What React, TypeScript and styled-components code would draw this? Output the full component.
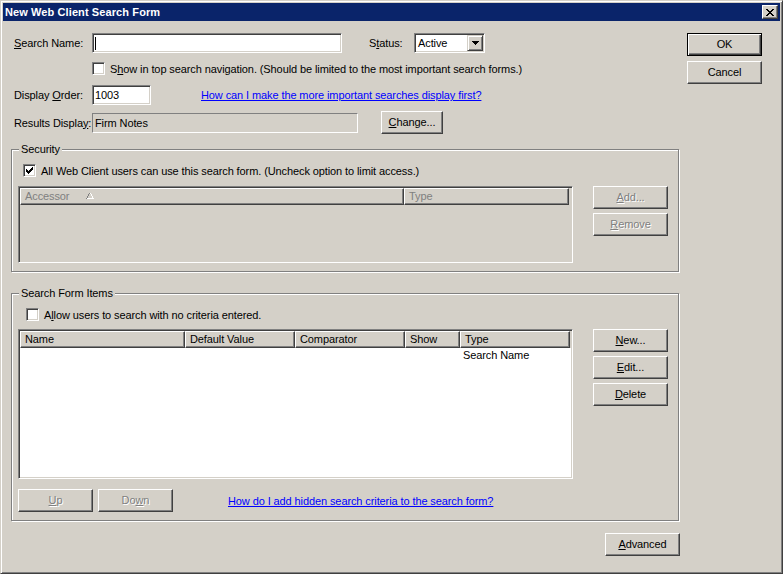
import React from 'react'
import styled, { createGlobalStyle, css } from 'styled-components'

const GlobalStyle = createGlobalStyle`
  html, body {
    margin: 0;
    padding: 0;
    background: #d4d0c8;
  }
  body {
    font-family: "Liberation Sans", Arial, sans-serif;
    font-size: 11px;
    letter-spacing: -0.1px;
    color: #000;
  }
`

const FONT = `"Liberation Sans", Arial, sans-serif`

// classic win32 bevels
const raised = css`
  border: 1px solid;
  border-color: #fff #404040 #404040 #fff;
  box-shadow: inset -1px -1px #808080;
`
const sunken = css`
  border: 1px solid;
  border-color: #808080 #fff #fff #808080;
  box-shadow: inset 1px 1px #404040, inset -1px -1px #d4d0c8;
`

const Window = styled.div`
  width: 783px;
  height: 574px;
  box-sizing: border-box;
  background: #d4d0c8;
  border: 1px solid;
  border-color: #d4d0c8 #404040 #404040 #d4d0c8;
  box-shadow: inset 1px 1px #fff, inset -1px -1px #808080;
  padding: 2px;
  display: flex;
  flex-direction: column;
  overflow: hidden;
`

const TitleBar = styled.div`
  height: 18px;
  flex-shrink: 0;
  background: #0a246a;
  display: flex;
  align-items: center;
  justify-content: space-between;
  padding: 0 2px 0 2px;
`

const TitleText = styled.span`
  color: #fff;
  font-weight: bold;
  font-size: 11px;
  letter-spacing: 0.1px;
`

const CloseButton = styled.div`
  width: 16px;
  height: 14px;
  box-sizing: border-box;
  background: #d4d0c8;
  ${raised};
  display: flex;
  align-items: center;
  justify-content: center;
`

const Body = styled.div`
  flex: 1;
  display: flex;
  padding: 12px 0 0 8px;
`

const Main = styled.div`
  width: 669px;
  display: flex;
  flex-direction: column;
`

const Side = styled.div`
  margin-left: 7px;
  display: flex;
  flex-direction: column;
  gap: 5px;
`

const FormRow = styled.div<{ $top?: number; $height?: number }>`
  display: flex;
  align-items: center;
  height: ${p => p.$height ?? 20}px;
  margin-top: ${p => p.$top ?? 0}px;
  padding-left: 3px;
`

const Label = styled.span<{ $width?: number; $gap?: number }>`
  width: ${p => (p.$width ? `${p.$width}px` : 'auto')};
  margin-left: ${p => p.$gap ?? 0}px;
  flex-shrink: 0;
  white-space: nowrap;
`

const Accel = styled.span`
  text-decoration: underline;
`

const Field = styled.div<{ $width: number; $readOnly?: boolean }>`
  width: ${p => p.$width}px;
  height: 20px;
  box-sizing: border-box;
  flex-shrink: 0;
  display: flex;
  align-items: center;
  ${p =>
    p.$readOnly
      ? css`
          border: 1px solid;
          border-color: #808080 #fff #fff #808080;
          background: #d4d0c8;
          padding-left: 2px;
        `
      : css`
          ${sunken};
          background: #fff;
          padding-left: 2px;
        `}
`

const Caret = styled.span`
  width: 1px;
  height: 13px;
  background: #000;
`

const Select = styled.div`
  width: 71px;
  height: 20px;
  box-sizing: border-box;
  ${sunken};
  background: #fff;
  display: flex;
  align-items: center;
  justify-content: space-between;
  padding: 0 1px 0 3px;
`

const DropButton = styled.div`
  width: 16px;
  height: 16px;
  box-sizing: border-box;
  background: #d4d0c8;
  border: 1px solid;
  border-color: #d4d0c8 #404040 #404040 #d4d0c8;
  box-shadow: inset 1px 1px #fff, inset -1px -1px #808080;
  display: flex;
  align-items: center;
  justify-content: center;
`

const Link = styled.a<{ $gap: number }>`
  color: #0000ff;
  text-decoration: underline;
  margin-left: ${p => p.$gap}px;
  white-space: nowrap;
  cursor: pointer;
`

const Button = styled.button<{ $width?: number; $primary?: boolean; $gap?: number }>`
  width: ${p => p.$width ?? 75}px;
  height: 23px;
  box-sizing: border-box;
  flex-shrink: 0;
  margin: 0 0 0 ${p => p.$gap ?? 0}px;
  padding: 0 0 1px;
  background: #d4d0c8;
  font-family: ${FONT};
  font-size: 11px;
  letter-spacing: -0.1px;
  color: #000;
  ${raised};
  ${p =>
    p.$primary &&
    css`
      border-color: #000;
      box-shadow: inset 1px 1px #fff, inset -1px -1px #404040, inset -2px -2px #808080;
    `}
  &:disabled {
    color: #808080;
    text-shadow: 1px 1px #fff;
  }
`

const CheckRow = styled.div<{ $indent: number; $top?: number }>`
  display: flex;
  align-items: center;
  gap: 5px;
  height: 13px;
  margin-left: ${p => p.$indent}px;
  margin-top: ${p => p.$top ?? 0}px;
  white-space: nowrap;
`

const CheckBox = styled.span`
  width: 13px;
  height: 13px;
  box-sizing: border-box;
  flex-shrink: 0;
  ${sunken};
  background: #fff;
  display: flex;
  align-items: center;
  justify-content: center;
`

const GroupBox = styled.div<{ $top: number }>`
  position: relative;
  width: 668px;
  box-sizing: border-box;
  margin-top: ${p => p.$top}px;
  border: 1px solid #808080;
  box-shadow: inset 1px 1px #fff, 1px 1px #fff;
  padding: 14px 0 8px 6px;
  display: flex;
  flex-direction: column;
`

const GroupTitle = styled.span`
  position: absolute;
  top: -7px;
  left: 7px;
  padding: 0 2px;
  line-height: 13px;
  background: #d4d0c8;
`

const ListArea = styled.div<{ $top: number }>`
  display: flex;
  align-items: flex-start;
  margin-top: ${p => p.$top}px;
`

const ListView = styled.div<{ $height: number; $disabled?: boolean }>`
  width: 555px;
  height: ${p => p.$height}px;
  box-sizing: border-box;
  ${sunken};
  padding: 1px;
  background: ${p => (p.$disabled ? '#d4d0c8' : '#fff')};
  display: flex;
  flex-direction: column;
`

const HeaderRow = styled.div`
  display: flex;
  height: 17px;
  flex-shrink: 0;
`

const HeaderCell = styled.div<{ $width: number; $disabled?: boolean }>`
  width: ${p => p.$width}px;
  box-sizing: border-box;
  background: #d4d0c8;
  ${raised};
  padding: 0 0 1px 4px;
  display: flex;
  align-items: center;
  color: ${p => (p.$disabled ? '#808080' : '#000')};
  white-space: nowrap;
  overflow: hidden;
`

const HeaderFill = styled.div`
  flex: 1;
  background: #d4d0c8;
`

const SortMark = styled.svg`
  margin-left: 17px;
`

const DataRow = styled.div`
  display: flex;
  height: 14px;
  align-items: center;
`

const DataCell = styled.div<{ $width: number }>`
  width: ${p => p.$width}px;
  padding-left: 3px;
  box-sizing: border-box;
  white-space: nowrap;
`

const ButtonColumn = styled.div`
  margin-left: 20px;
  display: flex;
  flex-direction: column;
  gap: 4px;
`

const BottomRow = styled.div`
  display: flex;
  align-items: center;
  margin-top: 10px;
`

const Footer = styled.div`
  display: flex;
  justify-content: flex-end;
  margin-top: 12px;
`

const CloseGlyph = () => (
  <svg width="8" height="7" viewBox="0 0 8 7" shapeRendering="crispEdges">
    <path
      fill="#000"
      d="M0 0h2v1h-2z M6 0h2v1h-2z M1 1h2v1h-2z M5 1h2v1h-2z M2 2h4v1h-4z M3 3h2v1h-2z M2 4h4v1h-4z M1 5h2v1h-2z M5 5h2v1h-2z M0 6h2v1h-2z M6 6h2v1h-2z"
    />
  </svg>
)

const DownArrow = () => (
  <svg width="7" height="4" viewBox="0 0 7 4" shapeRendering="crispEdges">
    <path fill="#000" d="M0 0h7v1h-7z M1 1h5v1h-5z M2 2h3v1h-3z M3 3h1v1h-1z" />
  </svg>
)

const CheckMark = () => (
  <svg width="7" height="7" viewBox="0 0 7 7" shapeRendering="crispEdges">
    <path
      fill="#000"
      d="M6 0h1v1h-1z M5 1h2v1h-2z M0 2h1v1h-1z M4 2h3v1h-3z M0 3h2v1h-2z M3 3h3v1h-3z M0 4h5v1h-5z M1 5h3v1h-3z M2 6h1v1h-1z"
    />
  </svg>
)

const itemColumns = [
  { title: 'Name', width: 165 },
  { title: 'Default Value', width: 110 },
  { title: 'Comparator', width: 110 },
  { title: 'Show', width: 55 },
  { title: 'Type', width: 110 },
]

const App = () => {
  return (
    <>
      <GlobalStyle />
      <Window>
        <TitleBar>
          <TitleText>New Web Client Search Form</TitleText>
          <CloseButton>
            <CloseGlyph />
          </CloseButton>
        </TitleBar>
        <Body>
          <Main>
            <FormRow>
              <Label $width={78}>
                <Accel>S</Accel>earch Name:
              </Label>
              <Field $width={250}>
                <Caret />
              </Field>
              <Label $width={45} $gap={27}>
                S<Accel>t</Accel>atus:
              </Label>
              <Select>
                <span>Active</span>
                <DropButton>
                  <DownArrow />
                </DropButton>
              </Select>
            </FormRow>

            <FormRow $top={9} $height={13}>
              <Label $width={78} />
              <CheckRow $indent={0}>
                <CheckBox />
                <span>
                  S<Accel>h</Accel>ow in top search navigation. (Should be limited to the most important
                  search forms.)
                </span>
              </CheckRow>
            </FormRow>

            <FormRow $top={10}>
              <Label $width={78}>
                Display <Accel>O</Accel>rder:
              </Label>
              <Field $width={59}>1003</Field>
              <Link $gap={50}>How can I make the more important searches display first?</Link>
            </FormRow>

            <FormRow $top={6} $height={23}>
              <Label $width={78}>
                Results Displa<Accel>y</Accel>:
              </Label>
              <Field $width={266} $readOnly>
                Firm Notes
              </Field>
              <Button $width={62} $gap={23}>
                <Accel>C</Accel>hange...
              </Button>
            </FormRow>

            <GroupBox $top={15}>
              <GroupTitle>Security</GroupTitle>
              <CheckRow $indent={5}>
                <CheckBox>
                  <CheckMark />
                </CheckBox>
                <span>All Web Client users can use this search form. (Uncheck option to limit access.)</span>
              </CheckRow>
              <ListArea $top={9}>
                <ListView $height={77} $disabled>
                  <HeaderRow>
                    <HeaderCell $width={384} $disabled>
                      Accessor
                      <SortMark width="8" height="6" viewBox="0 0 8 6" shapeRendering="crispEdges">
                        <path fill="#808080" d="M3 0h1v1h-1z M2 1h1v2h-1z M1 3h1v2h-1z M0 5h1v1h-1z" />
                        <path fill="#fff" d="M4 0h1v1h-1z M5 1h1v2h-1z M6 3h1v2h-1z M1 5h7v1h-7z" />
                      </SortMark>
                    </HeaderCell>
                    <HeaderCell $width={165} $disabled>
                      Type
                    </HeaderCell>
                    <HeaderFill />
                  </HeaderRow>
                </ListView>
                <ButtonColumn>
                  <Button disabled>
                    <Accel>A</Accel>dd...
                  </Button>
                  <Button disabled>
                    <Accel>R</Accel>emove
                  </Button>
                </ButtonColumn>
              </ListArea>
            </GroupBox>

            <GroupBox $top={21}>
              <GroupTitle>Search Form Items</GroupTitle>
              <CheckRow $indent={8}>
                <CheckBox />
                <span>
                  A<Accel>l</Accel>low users to search with no criteria entered.
                </span>
              </CheckRow>
              <ListArea $top={8}>
                <ListView $height={150}>
                  <HeaderRow>
                    {itemColumns.map(col => (
                      <HeaderCell key={col.title} $width={col.width}>
                        {col.title}
                      </HeaderCell>
                    ))}
                    <HeaderFill />
                  </HeaderRow>
                  <DataRow>
                    {itemColumns.map(col => (
                      <DataCell key={col.title} $width={col.width}>
                        {col.title === 'Type' ? 'Search Name' : ''}
                      </DataCell>
                    ))}
                  </DataRow>
                </ListView>
                <ButtonColumn>
                  <Button>
                    <Accel>N</Accel>ew...
                  </Button>
                  <Button>
                    <Accel>E</Accel>dit...
                  </Button>
                  <Button>
                    <Accel>D</Accel>elete
                  </Button>
                </ButtonColumn>
              </ListArea>
              <BottomRow>
                <Button disabled>
                  <Accel>U</Accel>p
                </Button>
                <Button disabled $gap={5}>
                  Do<Accel>w</Accel>n
                </Button>
                <Link $gap={55}>How do I add hidden search criteria to the search form?</Link>
              </BottomRow>
            </GroupBox>

            <Footer>
              <Button>
                <Accel>A</Accel>dvanced
              </Button>
            </Footer>
          </Main>

          <Side>
            <Button $primary>OK</Button>
            <Button>Cancel</Button>
          </Side>
        </Body>
      </Window>
    </>
  )
}

export default App
